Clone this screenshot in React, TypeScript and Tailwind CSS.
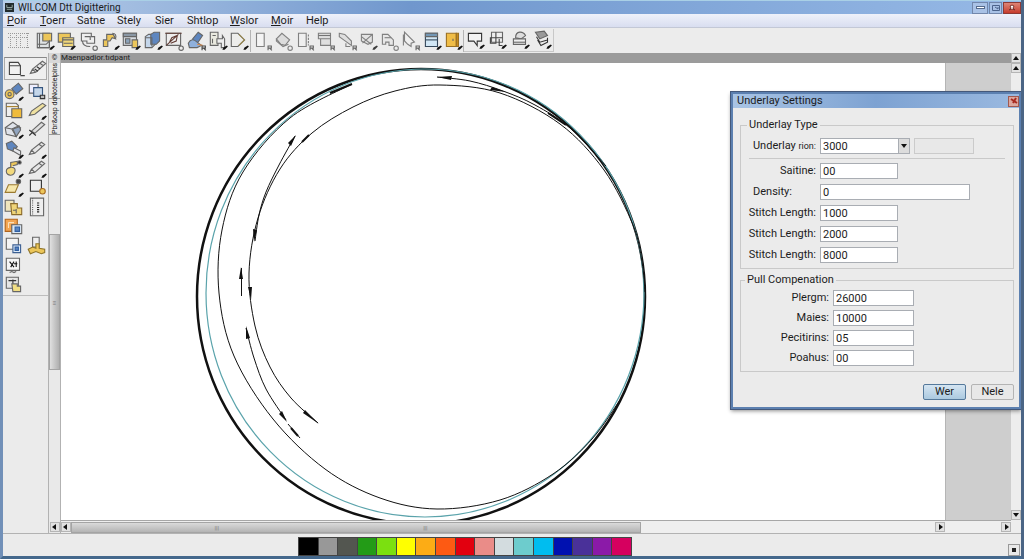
import type { ReactNode } from 'react'

type Point = [number, number]

const menus = ['Poir', 'Toerr', 'Satne', 'Stely', 'Sier', 'Shtlop', 'Wslor', 'Moir', 'Help']
const underlined = ['Poir', 'Toerr', 'Wslor', 'Moir']

const menuWidths = [
  'w-[33px]', 'w-[37px]', 'w-[40px]', 'w-[38px]', 'w-[32px]', 'w-[43px]', 'w-[41px]', 'w-[35px]', 'w-[40px]',
]

const swatches = [
  'bg-black', 'bg-[#989898]', 'bg-[#535650]', 'bg-[#239b17]', 'bg-[#7be010]', 'bg-[#ffff00]',
  'bg-[#fcac15]', 'bg-[#fd5a13]', 'bg-[#e2000f]', 'bg-[#ea8c88]', 'bg-[#d3dcdf]', 'bg-[#6dcccd]',
  'bg-[#00bdef]', 'bg-[#0011b0]', 'bg-[#4a3199]', 'bg-[#8b1aa8]', 'bg-[#d6005f]',
]

const Y = '#ecc65a'
const B = '#5e86bf'
const L = '#c4d6ea'

const drop = <path d="M14 18l1-2 3-2 1 1-3 3z" fill="#111" stroke="none" />
const tag = <path d="M15.500 18.500v-4h3v2h-3m1.500 0l2 2" stroke="#444" fill="none" />
const ring = <circle cx="16.500" cy="16.500" r="2" stroke="#666" fill="#eee" />

const mainIcons: [string, ReactNode][] = [
  ['Design', <><path d="M3 3h11v13H3z" fill="#dfe3e4" /><path d="M8 3h8v7H8z" fill={Y} /><path d="M5 3v13M3 13h8l3-3v6H3" />{drop}</>],
  ['Layers', <><path d="M3 3h11v8H3z" fill={Y} /><path d="M7 7h10v8H7z" fill="#f1d778" /><path d="M7 9h10M8 12h8" />{drop}</>],
  ['Shape', <><path d="M4 3h9v3h3v6H9v-2H4z" fill="#eee" /><path d="M5 10c0 4 4 5 7 5M7 6h5v3" />{ring}</>],
  ['Path', <><path d="M4 15V9h3V4h6l2 4-3-1-2 3H8v5z" fill={Y} /><path d="M12 3c3 0 4 2 3 5" />{drop}</>],
  ['Sheet', <><path d="M3 3h12v11H3z" fill="#d8dde2" /><path d="M3 3h12v3H3z" fill="#8b98a5" /><path d="M11 9h5v7h-5z" fill={Y} /><path d="M5 8h4v4H5z" fill="#8ba3ba" />{drop}</>],
  ['Cube', <><path d="M3 6l3-2h6v9l-3 3H3z" fill={L} /><path d="M8 4l3-2h5v8l-3 3H8z" fill={B} /><path d="M3 7h6v8" />{drop}</>],
  ['Edit', <><path d="M3 3h13v11H3z" fill="#eee" /><path d="M2 3h15M6 11l2-4 5-2-1 5-5 2M3 14l11-10" stroke="#623c35" />{ring}</>],
  ['Brush', <><path d="M7 8l5-6 4 3-4 6-4 1z" fill={B} /><path d="M3 12c2-4 5-4 8-1l4 3-4 2H4z" fill="#8fb0dc" /><path d="M11 13l5 1" stroke="#d98b4a" />{tag}</>],
  ['Pages', <><path d="M3 2h7v12H3z" fill="#e9e9df" /><path d="M9 8h5V5l2 3v8h-3v-4H9z" fill="#eee" /><path d="M5 5h3M5 8v4" />{drop}</>],
  ['Next', <><path d="M3 3h6l6 6-6 6H3z" fill="#ededeb" /><path d="M10 4l5 5-5 5" stroke="#9d8c50" />{drop}</>],
]

const stitchIcons: [string, ReactNode][] = [
  ['Page', <><path d="M5 3h7v12H5z" fill="#f6f6f6" />{tag}</>],
  ['Diamond', <><path d="M4 8l5-5 7 6-4 5-4-1z" fill="#d9d9d9" /><path d="M4 8v2l6 5 5-2" />{ring}</>],
  ['Column', <><path d="M5 3h7v12H5z" fill="#f0f0f0" /><path d="M14 4v10" strokeDasharray="2 1" />{tag}</>],
  ['Window', <><path d="M4 3h11v5H4zM6 8h9v6H6z" fill="#ddd" /><path d="M4 5h11" stroke="#555" />{tag}</>],
  ['Flip', <><path d="M3 3l5 1 6 6v4l-7-5-4-3z" fill="#ddd" /><path d="M9 12v3h4" />{tag}</>],
  ['Crop', <><path d="M4 4h10v7l-4 2-6-3z" fill="#e2e2e2" /><path d="M5 12l9-8M4 6l9 7" />{drop}</>],
  ['Scale', <><path d="M4 13V4h5l5 5v5h-4v-3H7v2z" fill="#e6e6e6" /><path d="M6 7h6" />{ring}</>],
  ['Pointer', <><path d="M5 2l9 9-3 1v3l-3-2-3-3z" fill="#f1f1f1" /><path d="M4 4v10" />{tag}</>],
]

const panelIcons: [string, ReactNode][] = [
  ['Panel', <><path d="M4 3h11v12H4z" fill="#d2e7f5" stroke="#35485a" /><path d="M4 3h11v3H4z" fill="#7397b5" /><path d="M4 9h11" stroke="#35485a" />{drop}</>],
  ['Book', <><path d="M4 3h9v12H4z" fill="#f0bd47" stroke="#9a7023" /><path d="M13 3h2v12h-2z" fill="#c98c1e" stroke="#9a7023" /><path d="M10 8v2" />{drop}</>],
]

const viewIcons: [string, ReactNode][] = [
  ['Monitor', <><path d="M4 4h12v7h-4v4l-3-4H4z" fill="#f3f3f3" stroke="#333" />{drop}</>],
  ['Blocks', <><path d="M5 3h10v9H5z" fill="#eee" /><path d="M4 8h5v5H4zM9 3v5h6M12 9v6h3" stroke="#444" />{drop}</>],
  ['Print', <><path d="M6 8c0-7 7-6 9-2l-4 3z" fill="#ddd" /><path d="M4 9h11v5H4z" fill="#eee" /><path d="M4 12h11" />{drop}</>],
  ['Stack', <><path d="M4 3l8-1 3 4-7 3z" fill="#999" /><path d="M5 7l3 5 7-2M6 10l3 5 6-3V8" stroke="#333" />{drop}</>],
]

const pencil = <path d="M3 14l2-4 9-7 3 2-9 8zM5 10l3 3M12 5l3 2" fill="#e6e6e6" />

// two columns, null keeps an empty place in the grid
const toolIcons: ([string, ReactNode] | null)[] = [
  ['Spool', <><path d="M8 7l6-5 4 5-6 5z" fill={B} /><circle cx="6" cy="12" r="4" fill={Y} /><circle cx="6" cy="12" r="1.500" />{drop}</>],
  ['Frames', <><path d="M3 3h8v8H3z" fill="#eef" /><path d="M7 6h8v8H7z" fill={L} stroke="#34557f" /><path d="M13 13h4v3h-4z" fill="#bbb" stroke="#333" /></>],
  ['Folder', <><path d="M3 3h9l2 2v10H3z" fill="#eee" /><path d="M8 8h9v8H8z" fill="#efbb3c" /><path d="M3 6h11" stroke="#a67f29" /></>],
  ['Yellow pencil', <><path d="M3 14l2-4 10-7 3 2-10 8z" fill="#efe1a0" />{drop}</>],
  ['Box', <><path d="M2 8l7-5 7 5-4 8-9-2z" fill="#dfe3ea" /><path d="M2 8l6 1 4 7M8 9l7-3" /><path d="M9 9l6-2 1 3-4 6z" fill="#91a5c0" />{drop}</>],
  ['Knife', <><path d="M5 11l9-8 3 2-9 8z" fill="#dedede" /><path d="M3 10l6 5M3 15l3-3" stroke="#333" /></>],
  ['Eraser', <><path d="M3 4l5-2 5 5-4 4-5-2z" fill={B} /><path d="M10 8l6 3v4l-7-4z" fill="#e4e6ea" />{drop}</>],
  ['Pencil', <>{pencil}{drop}</>],
  ['Thread', <><path d="M3 12c0-4 8-5 8-1 0 6-8 6-8 1z" fill="#f2d97c" /><path d="M7 9V4l6-1v3l-4 1" fill={Y} /><circle cx="15" cy="4" r="1.500" fill="#333" />{drop}</>],
  ['Fine pencil', <>{pencil}{drop}</>],
  ['Plane', <><path d="M2 14l3-7h9l-3 7z" fill="#f6e7ab" stroke="#9b7a30" /><circle cx="14" cy="4" r="2" fill="#444" />{drop}</>],
  ['Square', <><path d="M4 3h10v10H4z" fill="#eee" stroke="#333" /><circle cx="15" cy="13" r="2.500" fill={Y} stroke="#a56b20" /></>],
  ['Copy', <><path d="M2 3h8v10H2z" fill="#efe5bd" /><path d="M7 6h6v4h4v6H8z" fill="#f0d578" stroke="#8a6a2a" /><path d="M12 11v4M9 12h3" /></>],
  ['Ruler', <><path d="M4 1h12v16H4z" fill="#eee" /><path d="M6 1v16" strokeDasharray="1 1" /><path d="M11 5v9" stroke="#222" strokeWidth="2" strokeDasharray="1 1" /></>],
  ['Transform', <><path d="M2 3h11v5H8v6H2z" fill="#f3a552" stroke="#b0641d" /><path d="M5 6h5M5 6v5" stroke="#fbe0ba" /><path d="M8 8h9v8H8z" fill="#dce9f6" /><path d="M11 10h4v4h-4z" fill={B} stroke="#2e5fa3" /></>],
  null,
  ['Select', <><path d="M3 3h11v10H3z" fill="#f4f4f4" /><path d="M9 9h7v7H9z" fill="#dce9f6" stroke="#3c5f91" /><path d="M11 11h3v3h-3z" fill={B} stroke="#2e5fa3" /></>],
  ['Output', <><path d="M6 2h6v9H6z" fill="#eee" /><path d="M2 13l4-2 3 1V8h3v4l5 1v3l-3 1-5-2-5 2z" fill={Y} stroke="#8f7429" /></>],
  ['Chart', <><path d="M3 3h12v11H3z" fill="#f6f6f6" /><path d="M6 6l4 5M7 11l3-5M12 6v5M10 8h3" stroke="#111" /><path d="M6 16l2-1 2 1 2-1" /></>],
  null,
  ['Save', <><path d="M3 3h11v10H3z" fill="#e6e6e6" /><path d="M5 6h7M9 5v4" stroke="#333" /><path d="M8 9h5v2h3v5H9z" fill="#f1de84" /></>],
  null,
]

// smooth curve through a list of points
const curve = (points: Point[]) => {
  let d = `M${points[0][0]} ${points[0][1]}`
  for (let i = 0; i < points.length - 1; i++) {
    const p0 = points[i - 1] ?? points[i]
    const p1 = points[i]
    const p2 = points[i + 1]
    const p3 = points[i + 2] ?? p2
    d += ` C${p1[0] + (p2[0] - p0[0]) / 6} ${p1[1] + (p2[1] - p0[1]) / 6}`
    d += ` ${p2[0] - (p3[0] - p1[0]) / 6} ${p2[1] - (p3[1] - p1[1]) / 6} ${p2[0]} ${p2[1]}`
  }
  return d
}

const outerCrescent: Point[] = [
  [352, 84], [290, 118], [243, 172], [222, 230], [219, 293], [234, 356], [273, 419],
  [325, 469], [380, 498], [437, 509], [500, 500], [553, 474], [592, 439], [620, 400],
]

const innerCrescent: Point[] = [
  [645, 292], [642, 262], [633, 225], [604, 170], [560, 124], [500, 93], [440, 85], [395, 91], [353, 107],
  [312, 133], [280, 169], [258, 218], [249, 273], [255, 326], [270, 367], [291, 398], [318, 423],
]

const Glyph = ({ children }: { children: ReactNode }) => (
  <svg viewBox="0 0 20 20" className="h-[22px] w-[22px] shrink-0" fill="none" stroke="#666" strokeWidth="1">
    {children}
  </svg>
)

const IconRow = ({ icons, className }: { icons: [string, ReactNode][]; className: string }) => (
  <div className={`flex items-center ${className}`}>
    {icons.map(([name, icon]) => (
      <button key={name} aria-label={name} className="flex min-w-0 flex-1 justify-center">
        <Glyph>{icon}</Glyph>
      </button>
    ))}
  </div>
)

const arrows = {
  left: 'M6 2v6L2 5z',
  right: 'M4 2v6l4-3z',
  up: 'M2 7h6L5 3z',
  down: 'M2 3h6L5 7z',
}

const ArrowButton = ({ dir }: { dir: keyof typeof arrows }) => (
  <button aria-label={`Scroll ${dir}`} className="flex h-[10px] w-[10px] shrink-0 items-center justify-center border border-[#b5b5b5] bg-[#e2e2e2]">
    <svg viewBox="0 0 10 10" className="h-[10px] w-[10px] shrink-0"><path d={arrows[dir]} fill="#111" /></svg>
  </button>
)

const TitleBar = () => (
  <header className="flex h-[14px] shrink-0 items-center border-t border-[#a9d0e6] bg-linear-to-r from-[#b9cee9] via-[#7097cd] via-40% to-[#96b9e6] pl-[2px]">
    <svg viewBox="0 0 10 10" className="h-[9px] w-[9px]">
      <path d="M0 0h10v10H0z" fill="#222b2d" />
      <path d="M2 2v3h6V2M2 7h6" stroke="#9eb0ac" fill="none" />
    </svg>
    <h1 className="ml-1 flex-1 text-[10px] leading-[13px]">WILCOM Dtt Digittering</h1>
    <div className="flex h-[12px] gap-px text-white">
      <button aria-label="Minimize" className="flex w-4 items-center justify-center border border-[#7287ab] bg-[#a9c2e6]">
        <span className="h-[3px] w-[9px] border border-[#566b8c] bg-white" />
      </button>
      <button aria-label="Restore" className="flex w-[13px] items-center justify-center border border-[#7287ab] bg-[#a9c2e6]">
        <svg viewBox="0 0 10 8" className="h-2 w-[10px]" fill="none" stroke="#4c648c"><path d="M1.500 1.500h7v5h-7zM4 3l3 2V3" /></svg>
      </button>
      <button aria-label="Close" className="flex w-[18px] items-center justify-center border border-[#8d3a35] bg-linear-to-b from-[#dd8476] to-[#c63a2c]">
        <svg viewBox="0 0 10 8" className="h-2 w-[10px]" fill="#fff" stroke="#7c3530"><path d="M2 6l2-2-1-2 2-1 2 1-1 2 2 2-3-1z" /></svg>
      </button>
    </div>
  </header>
)

const MenuBar = () => (
  <nav className="flex h-[14px] shrink-0 items-end border-b border-[#c3c8d6] bg-linear-to-b from-[#eef1fa] to-[#d9def0] pl-1">
    {menus.map((name, i) => (
      <button key={name} className={`${menuWidths[i]} text-left text-[11px] leading-3`}>
        {underlined.includes(name) ? <><u>{name[0]}</u>{name.slice(1)}</> : name}
      </button>
    ))}
  </nav>
)

const Toolbar = () => (
  <div className="flex h-[25px] shrink-0 items-center bg-[#ececec]">
    <button aria-label="Grid" className="flex w-[31px] justify-center">
      <svg viewBox="0 0 24 18" className="h-[18px] w-6" fill="none" stroke="#999" strokeDasharray="1 1">
        <path d="M1 1.500h22M1 5.500h20M1 15.500h22M3.500 1v15M9.500 1v15M13.500 1v15M20.500 1v15" />
      </svg>
    </button>
    <IconRow icons={mainIcons} className="w-[216px] pt-px" />
    <span className="h-[22px] w-px bg-[#b4b4b4]" />
    <div className="flex items-center pt-px">
      <IconRow icons={stitchIcons} className="w-[170px] opacity-80" />
      <IconRow icons={panelIcons} className="w-[42px]" />
    </div>
    <span className="h-[22px] w-px bg-[#b4b4b4]" />
    <IconRow icons={viewIcons} className="h-[23px] w-[90px] border-r border-b border-[#c8c8c8]" />
  </div>
)

const ToolPalette = () => (
  <aside className="w-[45px] shrink-0 bg-[#ebebeb] pt-[4px]">
    <div className="mx-[1px] flex h-[23px] items-center border border-[#aaa] border-t-[#888] bg-[#efefef]">
      <button aria-label="Object" className="flex flex-1 justify-center">
        <Glyph><path d="M4 4h8l2 3v8H4z" fill="#f1f1f1" stroke="#444" /><path d="M4 7h10M14 16h4" stroke="#444" /></Glyph>
      </button>
      <button aria-label="Draw" className="flex flex-1 justify-center">
        <Glyph>{pencil}<path d="M7 10l3 2M9 8l3 2" stroke="#333" /></Glyph>
      </button>
    </div>
    <div className="grid h-[216px] grid-cols-2 border-b border-[#bdbdbd] pt-[2px]">
      {toolIcons.map((tool, i) =>
        tool ? (
          <button key={tool[0]} aria-label={tool[0]} className="flex h-[19px] items-center justify-center">
            <Glyph>{tool[1]}</Glyph>
          </button>
        ) : (
          <span key={i} />
        ),
      )}
    </div>
  </aside>
)

const SideTabs = () => (
  <div className="flex w-[13px] shrink-0 flex-col items-center border-x border-[#b2b2b2] bg-[#e9e9e9]">
    <button className="h-[10px] w-full bg-[#d8d8d8] text-[7px] leading-[9px]">©</button>
    <button className="h-9 w-full rotate-180 border-t border-[#999] text-[7px] leading-[10px] whitespace-nowrap [writing-mode:vertical-rl]">Noteleipins</button>
    <button className="h-9 w-full rotate-180 border-t border-[#999] text-[7px] leading-[10px] whitespace-nowrap [writing-mode:vertical-rl]">Pbr&amp;oap do</button>
    <div className="mt-[99px] flex h-[136px] w-full items-center justify-center border border-[#a4a4a4] bg-linear-to-r from-[#e0e0e0] to-[#b0b0b0] text-[6px] text-[#777]">≡</div>
    <div className="mt-auto flex h-[13px] items-center"><ArrowButton dir="left" /></div>
  </div>
)

const Drawing = () => (
  <svg viewBox="61 63 884 457" preserveAspectRatio="xMinYMin slice" className="h-full w-full" fill="none" stroke="#111">
    <ellipse cx="421" cy="296.500" rx="224" ry="227.500" strokeWidth="2.500" />
    <ellipse cx="425" cy="293" rx="219" ry="224" stroke="#5aa3ab" strokeWidth="1.200" />
    <path d={curve(outerCrescent)} />
    <path d={curve(innerCrescent)} />
    <path d={curve([[437, 77], [470, 81], [503, 91], [535, 105], [570, 128], [606, 166]])} />
    <path d={curve([[295, 136], [279, 165], [266, 192], [259, 215], [255, 241]])} />
    <path d="M241.500 268v28" />
    <path d={curve([[246, 328], [254, 358], [266, 389], [286, 420]])} />
    <path d="M288 424l12 14" />
    <path d="M352 84l-22 9M309 135l-7 7M291 428l7 8M548 113l18 12" strokeWidth="2" />
    <g fill="#111" stroke="none">
      <path d="M437 77l15-1-1 4zM506 92l-14-5-2 3zM296 135l-8 8 3 3zM254 242l-1-13 4 1zM241 267l-2 12h4zM251 300l-3-13h4zM246 326l0 13 4-1zM287 422l-8-8 3-3zM319 424l-16-11 2-3z" />
    </g>
  </svg>
)

const Workspace = () => (
  <section className="flex min-w-0 flex-1 flex-col">
    <h2 className="h-[10px] shrink-0 bg-[#9b9b9b] text-[8px] leading-[10px]">Maenpadior.tıdpant</h2>
    <div className="flex min-h-0 flex-1">
      <main className="min-w-0 flex-1 bg-white"><Drawing /></main>
      <div className="w-[66px] shrink-0 border-l border-[#b5b5b5] bg-[#cecece]" />
    </div>
    <div className="flex h-[13px] shrink-0 items-center border-t border-[#a7a7a7] bg-[#efefef]">
      <ArrowButton dir="left" />
      <div className="flex h-[11px] w-[60%] items-center border border-[#a4a4a4] bg-linear-to-b from-[#dadada] to-[#b4b4b4] pl-[15%] text-[6px] text-[#777]">
        <span>|||</span>
        <span className="ml-[48%]">|||</span>
      </div>
      <div className="mr-14 ml-auto"><ArrowButton dir="right" /></div>
      <ArrowButton dir="right" />
    </div>
  </section>
)

const inputStyle = 'border border-[#a9adb3] bg-white px-[2px] text-[11px] leading-[13px]'

const Field = ({ id, label, value, labelClass, inputClass }: { id: string; label: string; value: string; labelClass: string; inputClass: string }) => (
  <div className="flex items-center">
    <label htmlFor={id} className={`shrink-0 text-right ${labelClass}`}>{label}</label>
    <input id={id} defaultValue={value} className={`${inputStyle} h-4 ${inputClass}`} />
  </div>
)

const UnderlayDialog = () => (
  <div role="dialog" aria-labelledby="dialog-title" className="absolute top-[92px] right-0 w-[290px] border-2 border-[#5c80b0] bg-[#ebebeb] text-[11px] leading-[14px] shadow-[0_2px_4px_rgba(0,0,0,0.45)] outline outline-[#44587a]">
    <div className="flex h-[14px] items-center bg-linear-to-r from-[#a9c4e4] via-[#7da2d2] to-[#9ab9e0] pl-1">
      <h2 id="dialog-title" className="flex-1">Underlay Settings</h2>
      <button aria-label="Close dialog" className="flex h-[11px] w-[11px] items-center justify-center border border-[#a2594f] bg-[#dca79e]">
        <svg viewBox="0 0 8 8" className="h-2 w-2" stroke="#a82a20" strokeWidth="2"><path d="M1 2l6 4M6 1L3 6" /></svg>
      </button>
    </div>
    <div className="pt-[10px] pr-[5px] pb-[7px] pl-[7px]">
      <fieldset className="border border-[#c9c9c9] pb-[5px]">
        <legend className="ml-[6px] px-[2px]">Underlay Type</legend>
        <div className="flex items-center pt-[6px]">
          <label htmlFor="underlay" className="w-[75px] shrink-0 text-right">Underlay <span className="text-[9px]">rion:</span></label>
          <div className="relative ml-1">
            <select id="underlay" className={`${inputStyle} block h-4 w-[90px] appearance-none`}>
              <option>3000</option>
            </select>
            <span className="pointer-events-none absolute top-0 right-0 flex h-4 w-3 items-center justify-center border border-[#a9adb3] bg-[#dcdcdc]">
              <svg viewBox="0 0 6 4" className="h-1 w-[6px]"><path d="M0 0h6L3 4z" fill="#111" /></svg>
            </span>
          </div>
          <input aria-label="Underlay name" disabled className="ml-1 h-4 w-[60px] border border-[#cbcbcb] bg-[#e8e8e8]" />
        </div>
        <hr className="mx-2 my-1 border-[#c9c9c9]" />
        <div className="flex flex-col gap-[5px]">
          <Field id="saitine" label="Saitine:" value="00" labelClass="w-[75px]" inputClass="ml-1 w-[78px]" />
          <Field id="density" label="Density:" value="0" labelClass="w-[75px] pr-6" inputClass="ml-1 w-[150px]" />
          <Field id="length1" label="Stitch Length:" value="1000" labelClass="w-[75px]" inputClass="ml-1 w-[78px]" />
          <Field id="length2" label="Stitch Length:" value="2000" labelClass="w-[75px]" inputClass="ml-1 w-[78px]" />
          <Field id="length3" label="Stitch Length:" value="8000" labelClass="w-[75px]" inputClass="ml-1 w-[78px]" />
        </div>
      </fieldset>
      <fieldset className="mt-1 border border-[#c9c9c9] pb-[5px]">
        <legend className="ml-1 px-[2px]">Pull Compenation</legend>
        <div className="flex flex-col gap-1 pt-[3px]">
          <Field id="plergm" label="Plergm:" value="26000" labelClass="w-[88px]" inputClass="ml-1 w-[81px]" />
          <Field id="maies" label="Maies:" value="10000" labelClass="w-[88px]" inputClass="ml-1 w-[81px]" />
          <Field id="pecitirins" label="Pecitirins:" value="05" labelClass="w-[88px]" inputClass="ml-1 w-[81px]" />
          <Field id="poahus" label="Poahus:" value="00" labelClass="w-[88px]" inputClass="ml-1 w-[81px]" />
        </div>
      </fieldset>
      <div className="mt-3 flex justify-end gap-[5px]">
        <button className="h-4 w-[43px] rounded-xs border border-[#55799b] bg-linear-to-b from-[#d5e5f2] to-[#abc9df]">Wer</button>
        <button className="h-4 w-[43px] rounded-xs border border-[#b4b4b4] bg-[#e8e8e8]">Nele</button>
      </div>
    </div>
  </div>
)

const App = () => {
  return (
    <div className="relative flex h-screen flex-col overflow-hidden border-x-3 border-b-3 border-r-[#4b6585] border-b-[#44688c] border-l-[#7190b8] bg-[#ebebeb] font-[Roboto,sans-serif] text-[#1c1c1c]">
      <TitleBar />
      <MenuBar />
      <Toolbar />
      <div className="flex min-h-0 flex-1 border-b border-[#b2b2b2]">
        <ToolPalette />
        <SideTabs />
        <Workspace />
        <div className="flex w-[10px] shrink-0 flex-col bg-[#ededed] pb-[13px]">
          <ArrowButton dir="up" />
          <ArrowButton dir="up" />
          <div className="mt-auto"><ArrowButton dir="down" /></div>
        </div>
      </div>
      <footer className="flex h-[22px] shrink-0 items-end justify-between pr-px">
        <div className="ml-[29%] flex h-[19px] w-[334px] border-r border-[#444]">
          {swatches.map((color, i) => (
            <button key={color} aria-label={`Colour ${i + 1}`} className={`flex-1 border-y border-l border-[#444] ${color}`} />
          ))}
        </div>
        <button aria-label="Status" className="flex h-3 w-3 items-center justify-center border border-[#999] bg-[#e8e8e8]">
          <span className="h-1 w-1 bg-[#222]" />
        </button>
      </footer>
      <UnderlayDialog />
    </div>
  )
}

export default App
